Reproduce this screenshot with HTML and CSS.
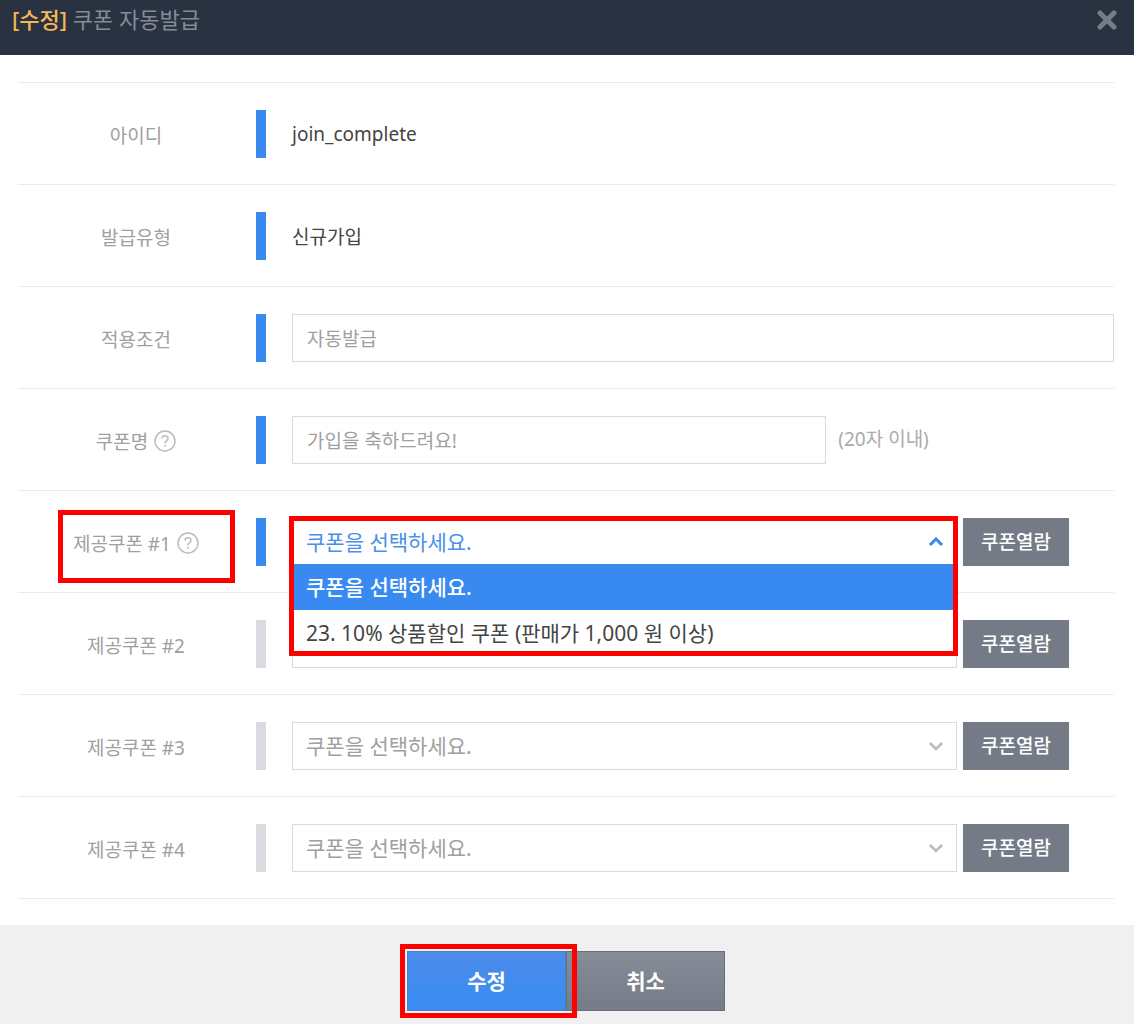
FILE: index.html
```html
<!DOCTYPE html>
<html lang="ko">
  <head>
    <meta charset="UTF-8" />
    <title>쿠폰 자동발급</title>
    <link rel="stylesheet" href="styles.css">
  </head>
  <body>
    <header class="header">
      <h1 class="title"><span class="mode">[수정]</span> 쿠폰 자동발급</h1>
      <button type="button" class="close-button" aria-label="닫기">
        <svg width="20" height="20" viewBox="0 0 20 20">
          <path d="M3 3 L17 17 M17 3 L3 17" />
        </svg>
      </button>
    </header>

    <form class="coupon-form">
      <div class="rows">
        <div class="row">
          <div class="label">아이디</div>
          <div class="field required">join_complete</div>
        </div>

        <div class="row">
          <div class="label">발급유형</div>
          <div class="field required">신규가입</div>
        </div>

        <div class="row">
          <div class="label"><label for="condition">적용조건</label></div>
          <div class="field required">
            <input type="text" id="condition" class="text-input" value="자동발급" />
          </div>
        </div>

        <div class="row">
          <div class="label">
            <label for="coupon-name">쿠폰명</label>
            <button type="button" class="help-button" aria-label="쿠폰명 도움말">
              <svg width="22" height="22" viewBox="0 0 22 22">
                <circle cx="11" cy="11" r="10" />
                <path d="M8 8.6 C8 4.8 14 4.9 14 8.4 C14 10.7 11 10.7 11 13.4 M11 15 V16.8" />
              </svg>
            </button>
          </div>
          <div class="field required">
            <input type="text" id="coupon-name" class="text-input name-input" value="가입을 축하드려요!" />
            <span class="hint">(20자 이내)</span>
          </div>
        </div>

        <div class="row">
          <div class="label">
            <label for="coupon-1">제공쿠폰 #1</label>
            <button type="button" class="help-button" aria-label="제공쿠폰 도움말">
              <svg width="22" height="22" viewBox="0 0 22 22">
                <circle cx="11" cy="11" r="10" />
                <path d="M8 8.6 C8 4.8 14 4.9 14 8.4 C14 10.7 11 10.7 11 13.4 M11 15 V16.8" />
              </svg>
            </button>
            <span class="mark label-mark"></span>
          </div>
          <div class="field required">
            <div class="select-box open">
              <select id="coupon-1">
                <option>쿠폰을 선택하세요.</option>
                <option>23. 10% 상품할인 쿠폰 (판매가 1,000 원 이상)</option>
              </select>
              <svg class="arrow" width="16" height="10" viewBox="0 0 16 10">
                <path d="M2 8 L8 2 L14 8" />
              </svg>
              <ul class="menu">
                <li class="selected">쿠폰을 선택하세요.</li>
                <li>23. 10% 상품할인 쿠폰 (판매가 1,000 원 이상)</li>
              </ul>
              <span class="mark select-mark"></span>
            </div>
            <button type="button" class="view-button">쿠폰열람</button>
          </div>
        </div>

        <div class="row">
          <div class="label"><label for="coupon-2">제공쿠폰 #2</label></div>
          <div class="field">
            <div class="select-box">
              <select id="coupon-2">
                <option>쿠폰을 선택하세요.</option>
              </select>
              <svg class="arrow" width="16" height="10" viewBox="0 0 16 10">
                <path d="M2 2 L8 8 L14 2" />
              </svg>
            </div>
            <button type="button" class="view-button">쿠폰열람</button>
          </div>
        </div>

        <div class="row">
          <div class="label"><label for="coupon-3">제공쿠폰 #3</label></div>
          <div class="field">
            <div class="select-box">
              <select id="coupon-3">
                <option>쿠폰을 선택하세요.</option>
              </select>
              <svg class="arrow" width="16" height="10" viewBox="0 0 16 10">
                <path d="M2 2 L8 8 L14 2" />
              </svg>
            </div>
            <button type="button" class="view-button">쿠폰열람</button>
          </div>
        </div>

        <div class="row">
          <div class="label"><label for="coupon-4">제공쿠폰 #4</label></div>
          <div class="field">
            <div class="select-box">
              <select id="coupon-4">
                <option>쿠폰을 선택하세요.</option>
              </select>
              <svg class="arrow" width="16" height="10" viewBox="0 0 16 10">
                <path d="M2 2 L8 8 L14 2" />
              </svg>
            </div>
            <button type="button" class="view-button">쿠폰열람</button>
          </div>
        </div>
      </div>

      <div class="footer">
        <div class="submit-wrap">
          <button type="submit" class="footer-button submit-button">수정</button>
          <span class="mark submit-mark"></span>
        </div>
        <button type="button" class="footer-button cancel-button">취소</button>
      </div>
    </form>
  </body>
</html>
```

FILE: styles.css
```css
* {
  box-sizing: border-box;
}
body {
  display: flex;
  flex-direction: column;
  min-height: 100vh;
  margin: 0;
  background-color: white;
  color: #444;
  font-family: "Noto Sans", "Noto Sans CJK KR", sans-serif;
  font-size: 19px;
}
button,
input,
select {
  font-family: inherit;
  font-size: inherit;
  font-weight: inherit;
}
button {
  padding: 0;
  border: none;
  cursor: pointer;
}
svg {
  display: block;
  fill: none;
}

.header {
  display: flex;
  justify-content: space-between;
  align-items: flex-start;
  height: 55px;
  padding: 3px 17px 0 12px;
  background-color: #293241;
}
.title {
  margin: 0;
  color: #858c98;
  font-size: 22px;
  font-weight: 400;
  line-height: 32px;
}
.mode {
  color: #f6b658;
  font-weight: 500;
}
.close-button {
  margin-top: 7px;
  background-color: transparent;
}
.close-button svg {
  stroke: #747c88;
  stroke-width: 5;
  stroke-linecap: round;
}

.coupon-form {
  display: flex;
  flex-direction: column;
  flex: 1;
}
.rows {
  margin: 27px 20px 26px 18px;
  border-top: 1px solid #ebebeb;
}
.row {
  display: flex;
  align-items: center;
  height: 102px;
  border-bottom: 1px solid #ebebeb;
}
.label {
  position: relative;
  display: flex;
  justify-content: center;
  align-items: center;
  gap: 6px;
  width: 238px;
  height: 48px;
  padding: 2px 2px 0 0;
  color: #a0a0a0;
}
.help-button {
  background-color: transparent;
}
.help-button svg {
  stroke: #bbb;
  stroke-width: 1.5;
}
.field {
  display: flex;
  align-items: center;
  flex: 1;
  height: 48px;
  padding-left: 26px;
  border-left: 10px solid #d9dbe1;
}
.required {
  border-left-color: #388af0;
}

.text-input {
  width: 100%;
  height: 48px;
  padding: 0 14px;
  border: 1px solid #d8dada;
  color: #a0a0a0;
}
.name-input {
  width: 65%;
}
.hint {
  margin-left: 12px;
  padding-bottom: 4px;
  color: #aaa;
}

.select-box {
  position: relative;
  flex: 1;
  height: 48px;
}
.select-box select {
  width: 100%;
  height: 48px;
  padding: 0 13px;
  border: 1px solid #d8dada;
  border-radius: 0;
  background-color: white;
  color: #a0a0a0;
  font-size: 21px;
  appearance: none;
}
.arrow {
  position: absolute;
  top: 19px;
  right: 13px;
  stroke: #bbb;
  stroke-width: 2.5;
  pointer-events: none;
}
.select-box.open select {
  color: #4a90ea;
}
.open .arrow {
  stroke: #388af0;
  stroke-width: 3;
}
/* the list hangs over the next row */
.menu {
  position: absolute;
  z-index: 1;
  top: 46px;
  left: 0;
  right: 0;
  margin: 0;
  padding: 0;
  background-color: white;
  list-style: none;
  font-size: 21px;
}
.menu li {
  height: 46px;
  padding-left: 14px;
  line-height: 46px;
}
.menu .selected {
  background-color: #388af0;
  color: white;
  font-weight: 500;
}
.view-button {
  width: 106px;
  height: 48px;
  margin: 0 45px 0 6px;
  padding-bottom: 2px;
  background-color: #747b87;
  color: white;
  font-weight: 500;
}

/* red frames */
.mark {
  position: absolute;
  z-index: 2;
  border: 5px solid #f00;
  pointer-events: none;
}
.label-mark {
  top: -8px;
  left: 40px;
  right: 21px;
  height: 73px;
}
.select-mark {
  top: -2px;
  left: -3px;
  right: -1px;
  height: 140px;
}
.submit-mark {
  top: -7px;
  left: -7px;
  right: -11px;
  height: 74px;
}

.footer {
  display: flex;
  justify-content: center;
  flex: 1;
  padding: 26px 2px 13px 0;
  background-color: #f0f0f0;
}
.submit-wrap {
  position: relative;
}
.footer-button {
  width: 159px;
  height: 60px;
  padding-bottom: 2px;
  color: white;
  font-size: 21px;
  font-weight: 600;
}
.submit-button {
  border: 1px solid #4682cb;
  background: linear-gradient(#4c8bea, #388df2);
}
.cancel-button {
  border: 1px solid #69707c;
  background: linear-gradient(#868c98, #757b87);
}
```
